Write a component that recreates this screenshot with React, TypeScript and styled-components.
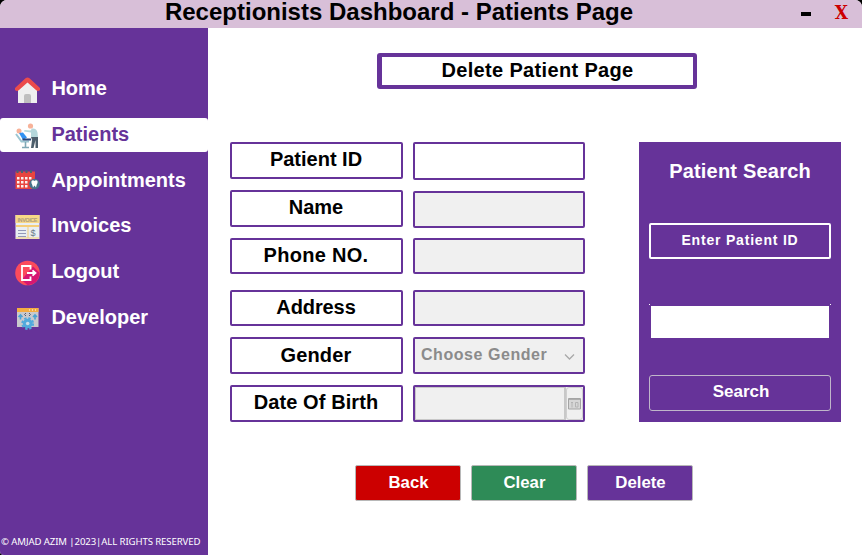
import React from "react";
import styled, { createGlobalStyle } from "styled-components";

const PURPLE = "#663399";

const GlobalStyle = createGlobalStyle`
  * { box-sizing: border-box; }
  html, body { margin: 0; background: #000; }
  body { font-family: "Liberation Sans", Arial, sans-serif; font-weight: 700; overflow: hidden; }
  button, input { font: inherit; margin: 0; }
`;

const Window = styled.div`
  width: 862px;
  height: 555px;
  display: flex;
  flex-direction: column;
  background: #fff;
  border-radius: 7px 7px 0 4px;
  overflow: hidden;
`;

const TitleBar = styled.header`
  height: 28px;
  flex: none;
  display: grid;
  grid-template-columns: 798px 20px 44px;
  background: #d8bfd8;
`;

const WindowTitle = styled.h1`
  margin: 0;
  padding-bottom: 4px;
  font-size: 24px;
  line-height: 24px;
  text-align: center;
  white-space: nowrap;
  color: #000;
`;

const Minimize = styled.button`
  border: 0;
  padding: 12px 7px 12px 3px;
  background: none;
  &::before {
    content: "";
    display: block;
    height: 4px;
    background: #000;
  }
`;

const Close = styled.button`
  border: 0;
  padding: 0 0 3px 3px;
  background: none;
  color: #cc0000;
  font: 700 19px/25px "DejaVu Serif", serif;
  font-stretch: condensed;
`;

const Body = styled.div`
  flex: 1;
  display: flex;
`;

const Sidebar = styled.aside`
  width: 208px;
  display: flex;
  flex-direction: column;
  justify-content: space-between;
  background: ${PURPLE};
`;

const Nav = styled.nav`
  padding-top: 44px;
  display: grid;
  grid-auto-rows: 34px;
  row-gap: 11.8px;
`;

const NavItem = styled.a<{ $active?: boolean }>`
  display: flex;
  align-items: center;
  padding-left: 15px;
  gap: 11.4px;
  border-radius: 3px;
  font-size: 20px;
  line-height: 30px;
  color: ${(p) => (p.$active ? PURPLE : "#fff")};
  background: ${(p) => (p.$active ? "#fff" : "transparent")};
  svg { flex: none; margin-top: 2px; }
  span { margin-top: -2px; }
`;

const Copyright = styled.small`
  padding: 0 0 6px 1px;
  font: 400 9.6px/14px "Noto Sans", sans-serif;
  letter-spacing: -0.1px;
  white-space: nowrap;
  color: #fff;
`;

const Main = styled.main`
  flex: 1;
  padding: 25px 21px 0 22px;
`;

const PageTitle = styled.h2`
  width: 320px;
  height: 36px;
  margin: 0 0 53px 147px;
  padding-bottom: 1px;
  border: 4px solid ${PURPLE};
  border-left-width: 5px;
  border-radius: 3px;
  font-size: 20px;
  line-height: 27px;
  letter-spacing: 0.34px;
  text-align: center;
`;

const Columns = styled.div`
  display: flex;
  justify-content: space-between;
  align-items: flex-start;
`;

const Form = styled.form`
  display: grid;
  grid-template-columns: 173px 172px;
  grid-template-rows: 48px 48px 52px 47px 48px 37px;
  column-gap: 10px;
`;

const Label = styled.label<{ $h: number; $spacing?: number; $line?: number }>`
  height: ${(p) => p.$h}px;
  padding-right: 1px;
  border: 2px solid ${PURPLE};
  border-radius: 2px;
  font-size: 20px;
  line-height: ${(p) => p.$line ?? 30}px;
  letter-spacing: ${(p) => p.$spacing ?? 0}px;
  text-align: center;
  color: #000;
`;

const Field = styled.div<{ $h: number; $drop?: number; $enabled?: boolean }>`
  height: ${(p) => p.$h}px;
  margin-top: ${(p) => p.$drop ?? 0}px;
  display: flex;
  border: 2px solid ${PURPLE};
  border-radius: 2px;
  background: ${(p) => (p.$enabled ? "#fff" : "#f0f0f0")};
`;

const TextInput = styled.input`
  flex: 1;
  min-width: 0;
  border: 0;
  padding: 0 6px;
  outline: 0;
  background: transparent;
`;

const SelectValue = styled.span`
  flex: 1;
  padding-left: 6px;
  font-size: 16px;
  line-height: 31px;
  letter-spacing: 0.55px;
  white-space: nowrap;
  color: #8b8b8b;
`;

const Chevron = styled.svg`
  margin: 14px 8px 0 0;
`;

const DateValue = styled.span`
  flex: 1;
  border: 1px solid #c8c8c8;
  border-right-width: 2px;
`;

const DateButton = styled.span`
  width: 17px;
  display: flex;
  align-items: center;
  justify-content: center;
  border: 1px solid #cfcfcf;
  border-radius: 3px;
  svg { flex: none; }
`;

const SearchPanel = styled.section`
  width: 202px;
  height: 280px;
  padding: 14px 10px 0;
  display: grid;
  grid-template-rows: 67px 81px 71px 36px;
  background: ${PURPLE};
  color: #fff;
  text-align: center;
`;

const SearchHeading = styled.h3`
  margin: 0;
  font-size: 20px;
  line-height: 30px;
  letter-spacing: 0.2px;
`;

const SearchLabel = styled.label`
  height: 36px;
  border: 2px solid #fff;
  border-radius: 2px;
  font-size: 14px;
  line-height: 30px;
  letter-spacing: 0.8px;
`;

const SearchBox = styled.div`
  height: 34px;
  padding: 2px 2px 0;
  background:
    linear-gradient(#fff, #fff) left top / 1px 1px no-repeat,
    linear-gradient(#fff, #fff) right top / 1px 1px no-repeat;
`;

const SearchInput = styled.input`
  display: block;
  width: 178px;
  height: 32px;
  border: 0;
  outline: 0;
  background: #fff;
`;

const SearchButton = styled.button`
  height: 36px;
  border: 1px solid #c0b6ca;
  border-radius: 3px;
  padding: 0 0 3px 2px;
  background: transparent;
  color: #fff;
  font-size: 17px;
`;

const Actions = styled.div`
  display: flex;
  gap: 10px;
  margin: 43px 0 0 125px;
`;

const ActionButton = styled.button<{ $color: string }>`
  width: 106px;
  height: 36px;
  border: 1px solid #b8b8b8;
  border-radius: 2px;
  padding: 0 0 1px 1px;
  background: ${(p) => p.$color};
  color: #fff;
  font-size: 16.8px;
`;

const HomeIcon = () => (
  <svg width="25" height="27" viewBox="0 0 25 27">
    <path d="M3 13 12.5 4 22 13V26H3Z" fill="#efefef" />
    <path d="M9 19q0-2 2-2h3q2 0 2 2v7H9Z" fill="#bfbfbf" />
    <path d="M0 11 10.5 1.2q2-1.5 4 0L25 11v2q-2 2-4 0L12.5 5.5 4 13q-2 2-4 0Z" fill="#eb4b4b" />
  </svg>
);

const PatientIcon = () => (
  <svg width="25" height="26" viewBox="0 0 25 26">
    <circle cx="15.500" cy="3" r="2.600" fill="#f7b299" />
    <circle cx="4" cy="8" r="2.500" fill="#f7b299" />
    <path d="M17 5.500q4.500-.5 5.500 4l.5 5h-7V9.500l-7-1 .5-1.500 6 .5Z" fill="#b4d7db" />
    <path d="M1 11 6.500 18.500H14" stroke="#9cc6d2" strokeWidth="2" fill="none" />
    <path d="M4 10 8 9.500l4 5-4 2.500Z" fill="#3292f2" />
    <path d="M7.500 16.500h8.500" stroke="#294577" strokeWidth="2" fill="none" />
    <path d="M16 14h7v11h-2.500v-8l-2 8H16l1-8Z" fill="#4c5e6b" />
    <path d="M10.500 19v5M7 24.500h7" stroke="#7fa8b6" strokeWidth="1.600" />
  </svg>
);

const AppointmentIcon = () => (
  <svg width="25" height="25" viewBox="0 0 25 25">
    <path d="M.5 2.500h19.500V20H.5Z" fill="#e8453f" />
    <path
      d="M2 8h2.500v2.500H2ZM6 8h2.500v2.500H6ZM10 8h2.500v2.500H10ZM14 8h2.500v2.500H14ZM2 12h2.500v2.500H2ZM6 12h2.500v2.500H6ZM10 12h2.500v2.500H10ZM2 16h2.500v2.500H2ZM6 16h2.500v2.500H6ZM10 16h2.500v2.500H10Z"
      fill="#faf0ee"
    />
    <path d="M2.500 1v3M7 1v3M11.500 1v3M16 1v3" stroke="#4a6173" strokeWidth="2" />
    <circle cx="19.500" cy="15" r="5.300" fill="#47728b" />
    <path d="M16.500 12q1.500-1.500 3 0 1.500-1.500 3 0 .5 2-.8 3.700L21 18.500l-1.500-2-1.500 2-.8-2.800Q16 14 16.500 12Z" fill="#fff" />
  </svg>
);

const InvoiceIcon = () => (
  <svg width="25" height="26" viewBox="0 0 25 26">
    <path d="M.5 1h24v24H.5Z" fill="#e9eef2" />
    <path d="M.5 1h24v8H.5Z" fill="#f8d887" />
    <path d="M1 12h23" stroke="#f5cd76" strokeWidth="2" />
    <text x="2.500" y="7.800" fontSize="5.500" textLength="20" fill="#ad9d7d">INVOICE</text>
    <path d="M13 13v11M1 24h23" stroke="#f5cd76" strokeWidth="1" />
    <path d="M3 16.500h8M3 19.500h8M3 22.500h8" stroke="#9499b8" strokeWidth="1" />
    <text x="15.500" y="22" fontSize="9" fontWeight="400" fill="#687887">$</text>
  </svg>
);

const LogoutIcon = () => (
  <svg width="25" height="26" viewBox="0 0 25 26">
    <circle cx="12.500" cy="13" r="12.300" fill="#fc4b5c" />
    <path d="M6.500 20 18 6.500l6.700 6.500q-1 11-12 12.200Z" fill="#d71672" />
    <path d="M15.500 9.500V6H7v14h8.500V16.500M12 13h8M17.500 10.300 20.500 13l-3 2.700" fill="none" stroke="#fff" strokeWidth="1.800" />
  </svg>
);

const DeveloperIcon = () => (
  <svg width="25" height="24" viewBox="0 0 25 24">
    <path d="M2 1h21.500v19H2Z" fill="#c9c9cd" />
    <path d="M2 1h21.500v4H2Z" fill="#f4ad43" />
    <path d="M14 3h1M17 3h1M20 3h1" stroke="#fff" />
    <path d="M5.500 12.500V8M3.500 10l2-2 2 2M20 12.500V8M18 10l2-2 2 2" fill="none" stroke="#4aa2d4" strokeWidth="1.600" />
    <path d="m11 6-1.500 1.500L11 9m3-3 1.500 1.500L14 9" fill="none" stroke="#555b70" />
    <circle cx="12.700" cy="16.500" r="4.800" fill="#51aadd" />
    <circle cx="12.700" cy="16.500" r="5.400" fill="none" stroke="#51aadd" strokeWidth="2" strokeDasharray="2.400 1.840" />
    <circle cx="12.700" cy="16.500" r="1.800" fill="#c9dce9" />
  </svg>
);

const CalendarIcon = () => (
  <svg width="13" height="12" viewBox="0 0 13 12">
    <path d="M.5.5h12v10.500H.5Z" fill="#d7d7d7" stroke="#a4a4a4" />
    <path d="M1 1.500h11" stroke="#adadad" />
    <path d="M3 4.500h2M4 4.500v5M7.500 4.500h2.500v4.500H7.500Z" fill="none" stroke="#b4b4b4" />
  </svg>
);

const navItems = [
  { text: "Home", Icon: HomeIcon },
  { text: "Patients", Icon: PatientIcon },
  { text: "Appointments", Icon: AppointmentIcon },
  { text: "Invoices", Icon: InvoiceIcon },
  { text: "Logout", Icon: LogoutIcon },
  { text: "Developer", Icon: DeveloperIcon },
];

export default function App() {
  return (
    <>
      <GlobalStyle />
      <Window>
        <TitleBar>
          <WindowTitle>Receptionists Dashboard - Patients Page</WindowTitle>
          <Minimize aria-label="Minimize" />
          <Close>X</Close>
        </TitleBar>
        <Body>
          <Sidebar>
            <Nav>
              {navItems.map(({ text, Icon }) => (
                <NavItem key={text} $active={text === "Patients"}>
                  <Icon />
                  <span>{text}</span>
                </NavItem>
              ))}
            </Nav>
            <Copyright>© AMJAD AZIM |2023|ALL RIGHTS RESERVED</Copyright>
          </Sidebar>
          <Main>
            <PageTitle>Delete Patient Page</PageTitle>
            <Columns>
              <Form>
                <Label $h={37} $line={31}>Patient ID</Label>
                <Field $h={38} $enabled><TextInput aria-label="Patient ID" /></Field>
                <Label $h={37}>Name</Label>
                <Field $h={37} $drop={1}><TextInput aria-label="Name" disabled /></Field>
                <Label $h={36} $spacing={0.3}>Phone NO.</Label>
                <Field $h={36}><TextInput aria-label="Phone number" disabled /></Field>
                <Label $h={36} $spacing={-0.1}>Address</Label>
                <Field $h={36}><TextInput aria-label="Address" disabled /></Field>
                <Label $h={37} $spacing={0.2} $line={32}>Gender</Label>
                <Field $h={37}>
                  <SelectValue>Choose Gender</SelectValue>
                  <Chevron width="11" height="8" viewBox="0 0 11 8">
                    <path d="m1 1.500 4.500 4.500L10 1.500" fill="none" stroke="#a9a9a9" strokeWidth="1.300" />
                  </Chevron>
                </Field>
                <Label $h={37} $spacing={0.1} $line={31}>Date Of Birth</Label>
                <Field $h={37}>
                  <DateValue />
                  <DateButton><CalendarIcon /></DateButton>
                </Field>
              </Form>
              <SearchPanel>
                <SearchHeading>Patient Search</SearchHeading>
                <SearchLabel>Enter Patient ID</SearchLabel>
                <SearchBox><SearchInput aria-label="Search patient ID" /></SearchBox>
                <SearchButton>Search</SearchButton>
              </SearchPanel>
            </Columns>
            <Actions>
              <ActionButton $color="#cc0000">Back</ActionButton>
              <ActionButton $color="#2e8b57">Clear</ActionButton>
              <ActionButton $color={PURPLE}>Delete</ActionButton>
            </Actions>
          </Main>
        </Body>
      </Window>
    </>
  );
}
